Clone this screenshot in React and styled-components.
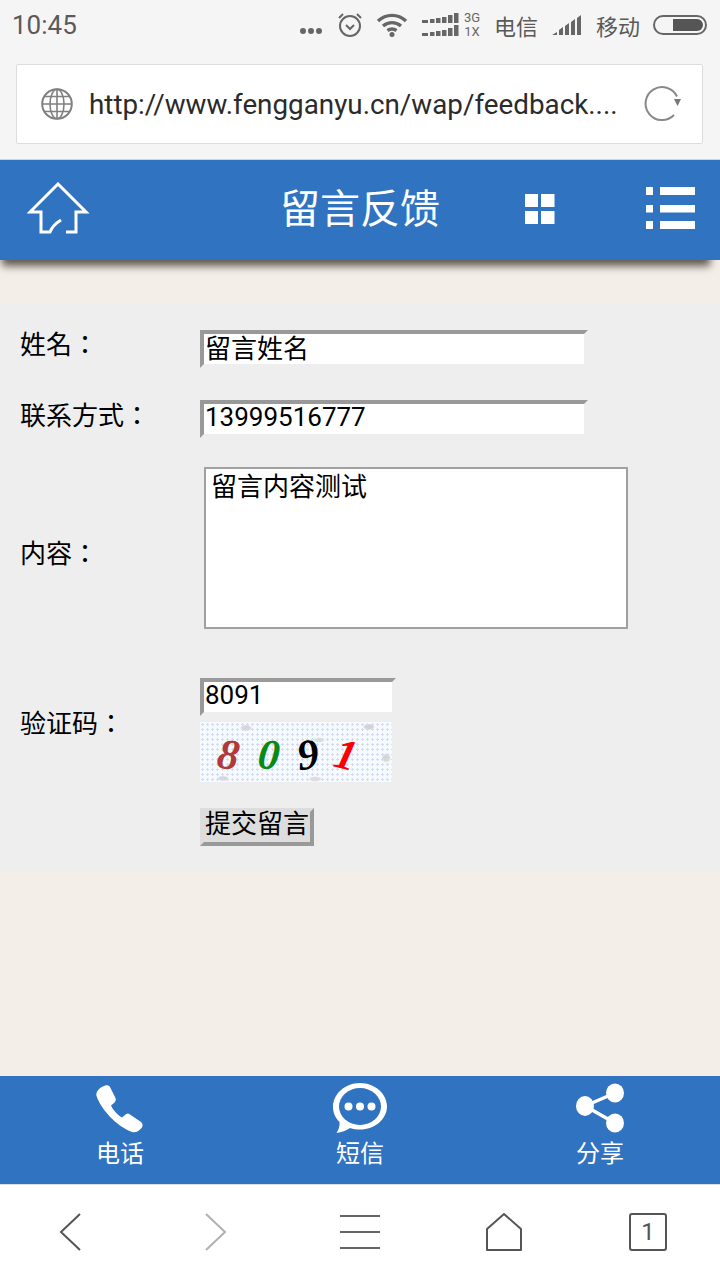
import React from "react";
import styled, { createGlobalStyle } from "styled-components";

const blue = "#3073c1";

const GlobalStyle = createGlobalStyle`
  html, body {
    margin: 0;
    padding: 0;
    background: #f3eee8;
  }
  * {
    box-sizing: border-box;
  }
  body {
    font-family: Roboto, "Noto Sans CJK SC", sans-serif;
  }
`;

const Page = styled.div`
  width: 720px;
  height: 1280px;
  display: flex;
  flex-direction: column;
  overflow: hidden;
  background: #f3eee8;
`;

const BrowserTop = styled.div`
  height: 160px;
  background: #f5f5f5;
  border-bottom: 1px solid #d4d4d4;
  flex: none;
`;

const StatusBar = styled.div`
  height: 50px;
  display: flex;
  align-items: center;
  padding: 0 13px 0 12px;
  color: #5a5a5a;
`;

const Time = styled.span`
  font-size: 26px;
  margin-right: auto;
`;

const StatusIcon = styled.svg`
  display: block;
  flex: none;
  margin-left: ${({ $ml }) => $ml || 0}px;
  margin-top: ${({ $mt }) => $mt || 0}px;
`;

const NetLabel = styled.div`
  display: flex;
  flex-direction: column;
  font-size: 13px;
  line-height: 14px;
  margin-left: 4px;
  color: #666;
  width: 18px;
  align-items: center;
`;

const Carrier = styled.span`
  font-size: 22px;
  margin-left: ${({ $ml }) => $ml}px;
`;

const UrlBox = styled.div`
  margin: 14px 17px 0 16px;
  height: 80px;
  background: #fff;
  border: 1px solid #dcdcdc;
  border-radius: 2px;
  display: flex;
  align-items: center;
  padding: 0 20px 0 24px;
`;

const UrlText = styled.span`
  font-size: 27.8px;
  color: #2b2b2b;
  margin-left: 16px;
  flex: 1;
  white-space: nowrap;
  overflow: hidden;
`;

const UrlIcon = styled.svg`
  display: block;
  flex: none;
`;

const Header = styled.header`
  height: 100px;
  flex: none;
  background: ${blue};
  display: flex;
  align-items: center;
  padding-left: 27px;
  box-shadow: -4px 12px 8px -6px #5f574f;
  position: relative;
`;

const HeaderTitle = styled.h1`
  margin: 0 0 0 189px;
  font-size: 40px;
  font-weight: 400;
  color: #fff;
  line-height: 1;
`;

const HeaderIcon = styled.svg`
  display: block;
  flex: none;
  margin-left: ${({ $ml }) => $ml || 0}px;
  margin-bottom: ${({ $mb }) => $mb || 0}px;
`;

const Main = styled.main`
  flex: 1;
  padding-top: 44px;
`;

const FormPanel = styled.form`
  background: #eee;
  padding: 26px 0;
  display: flex;
  flex-direction: column;
`;

const Row = styled.div`
  display: flex;
  align-items: center;
  margin-top: ${({ $mt }) => $mt || 0}px;
`;

const Label = styled.label`
  width: 200px;
  flex: none;
  padding-left: 20px;
  padding-bottom: ${({ $pb }) => $pb || 0}px;
  padding-top: ${({ $pt }) => $pt || 0}px;
  font: 26px/30px Roboto, "Noto Sans CJK JP", sans-serif;
  color: #000;
`;

const TextInput = styled.input`
  display: block;
  width: ${({ $w }) => $w}px;
  height: 38px;
  padding: 0 1px 5px;
  margin: 0;
  border: 4px solid;
  border-color: #999 #eee #eee #999;
  border-radius: 0;
  outline: none;
  background: #fff;
  color: #000;
  font: 26px Roboto, "Noto Sans CJK SC", sans-serif;
`;

const TextArea = styled.textarea`
  display: block;
  width: 424px;
  height: 162px;
  margin-left: 4px;
  padding: 2px 5px;
  border: 2px solid #a0a0a0;
  border-radius: 0;
  outline: none;
  resize: none;
  background: #fff;
  color: #000;
  font: 26px/32px Roboto, "Noto Sans CJK SC", sans-serif;
`;

const Stack = styled.div`
  display: flex;
  flex-direction: column;
  gap: 6px;
`;

const Captcha = styled.div`
  width: 192px;
  height: 60px;
  display: flex;
  align-items: center;
  padding: 4px 0 0 15px;
  background-color: #f4fbff;
  background-image:
    radial-gradient(circle, #dcd8f4 1px, transparent 1.2px),
    radial-gradient(ellipse 9px 5px at 24% 10%, #d6d6d6 40%, transparent 70%),
    radial-gradient(ellipse 9px 5px at 88% 8%, #d2d2d2 40%, transparent 70%),
    radial-gradient(ellipse 9px 4px at 12% 94%, #d6d6d6 40%, transparent 70%),
    radial-gradient(ellipse 9px 4px at 62% 30%, #dcdcdc 40%, transparent 70%),
    radial-gradient(ellipse 7px 7px at 97% 60%, #d6d6d6 40%, transparent 70%),
    radial-gradient(ellipse 10px 4px at 60% 95%, #dcdcdc 40%, transparent 70%);
  background-size: 5px 5px, 100% 100%, 100% 100%, 100% 100%, 100% 100%, 100% 100%, 100% 100%;
`;

const CaptchaDigit = styled.span`
  width: ${({ $w }) => $w}px;
  text-align: center;
  font: italic 700 43px/1 "Liberation Serif", serif;
  color: ${({ $color }) => $color};
  transform: rotate(${({ $rot }) => $rot}deg);
`;

const SubmitButton = styled.button`
  display: block;
  margin: 0 0 0 200px;
  height: 38px;
  width: 114px;
  padding: 0 1px 6px;
  background: #ddd;
  border: 4px solid;
  border-color: #ddd #999 #999 #ddd;
  border-radius: 0;
  color: #000;
  font: 26px/24px Roboto, "Noto Sans CJK SC", sans-serif;
  white-space: nowrap;
`;

const ActionBar = styled.nav`
  height: 108px;
  flex: none;
  background: ${blue};
  display: grid;
  grid-template-columns: repeat(3, 1fr);
`;

const Action = styled.div`
  display: flex;
  flex-direction: column;
  align-items: center;
  color: #fff;
  font-size: 24px;
  line-height: 28px;
`;

const ActionIcon = styled.svg`
  display: block;
  margin-top: 6px;
  height: 52px;
  margin-bottom: 6px;
`;

const BottomBar = styled.div`
  height: 96px;
  flex: none;
  background: #fff;
  border-top: 1px solid #ddd;
  padding-bottom: 2px;
  display: grid;
  grid-template-columns: repeat(5, 1fr);
  align-items: center;
  justify-items: center;
`;

const NavIcon = styled.svg`
  display: block;
  margin-right: ${({ $mr }) => $mr || 0}px;
`;

const TabCount = styled.div`
  width: 38px;
  height: 38px;
  border: 2px solid #555;
  border-radius: 3px;
  display: flex;
  align-items: center;
  justify-content: center;
  color: #555;
  font-size: 24px;
`;

function Alarm() {
  return (
    <StatusIcon width="26" height="26" viewBox="0 0 26 26" $ml={14} fill="none" stroke="#666" strokeWidth="2">
      <circle cx="13" cy="14" r="10" />
      <path d="M9 13l4 4 4-4M2 6l4-4M24 6l-4-4" />
    </StatusIcon>
  );
}

function Wifi() {
  return (
    <StatusIcon width="32" height="24" viewBox="0 0 32 24" $ml={13} fill="none" stroke="#666" strokeWidth="3.4">
      <path d="M2 8c8-7.5 20-7.5 28 0M7 13c5.5-4.5 12.5-4.5 18 0M11.5 17.5c2.8-2 6.2-2 9 0" />
      <circle cx="16" cy="21.5" r="2.5" fill="#666" stroke="none" />
    </StatusIcon>
  );
}

function NetBars() {
  const xs = [0, 8, 14, 20, 26, 32];
  const hs = [3, 4, 5, 6, 8, 11];
  return (
    <StatusIcon width="37" height="24" viewBox="0 0 37 24" $ml={14} fill="#666">
      {xs.map((x, i) => (
        <rect key={x} x={x} y={10 - hs[i]} width={i === 0 ? 6 : 4.5} height={hs[i]} />
      ))}
      {xs.map((x, i) => (
        <rect key={x} x={x} y={23 - hs[i]} width={i === 0 ? 6 : 4.5} height={hs[i]} />
      ))}
    </StatusIcon>
  );
}

function Signal() {
  return (
    <StatusIcon width="30" height="22" viewBox="0 0 30 22" $ml={14} fill="#666">
      <path d="M0 21l5-3v3zM7 21v-5l4-3v8zM13 21V12l4-3v12zM19 21V8l4-3v16zM25 21V4l4-3v20z" />
    </StatusIcon>
  );
}

function Battery() {
  return (
    <StatusIcon width="54" height="20" viewBox="0 0 54 20" $ml={13}>
      <rect x="1" y="1" width="52" height="18" rx="9" fill="none" stroke="#666" strokeWidth="2" />
      <path d="M20 4h24a6 6 0 0 1 0 12H20z" fill="#555" />
    </StatusIcon>
  );
}

function Globe() {
  return (
    <UrlIcon width="32" height="32" viewBox="0 0 32 32" fill="none" stroke="#808080" strokeWidth="1.6">
      <circle cx="16" cy="16" r="14.8" strokeWidth="2" />
      <ellipse cx="16" cy="16" rx="7" ry="14.8" />
      <path d="M16 1v30M1 16h30M3.5 8.5h25M3.5 23.5h25" />
    </UrlIcon>
  );
}

function Reload() {
  return (
    <UrlIcon width="38" height="36" viewBox="0 0 38 36" fill="none">
      <path d="M30 29A16.5 16.5 0 1 1 33 10.500" stroke="#888" strokeWidth="2" />
      <path d="M30 13h7l-3.500 7z" fill="#777" />
    </UrlIcon>
  );
}

function HomeOutline() {
  return (
    <HeaderIcon width="64" height="54" viewBox="0 0 64 54" $mb={2} fill="none" stroke="#fff" strokeWidth="3">
      <path d="M39 50h10V30h10L31 2 3 30h11v20h9c1.500-4 4.500-8 11-12" />
    </HeaderIcon>
  );
}

function GridIcon() {
  return (
    <HeaderIcon width="30" height="30" viewBox="0 0 30 30" $ml={85} $mb={2} fill="#fff">
      <rect width="13" height="13" />
      <rect x="16" width="13.500" height="13" />
      <rect y="17" width="13" height="13" />
      <rect x="16" y="17" width="13.500" height="13" />
    </HeaderIcon>
  );
}

function ListIcon() {
  return (
    <HeaderIcon width="50" height="42" viewBox="0 0 50 42" $ml={91} $mb={4} fill="#fff">
      <rect width="7" height="8" />
      <rect x="14" width="35" height="8" />
      <rect y="18" width="7" height="7.500" />
      <rect x="14" y="18" width="35" height="7.500" />
      <rect y="34" width="7" height="8" />
      <rect x="14" y="34" width="35" height="8" />
    </HeaderIcon>
  );
}

function PhoneIcon() {
  return (
    <ActionIcon width="48" height="52" viewBox="0 -3 48 52" fill="#fff">
      <path d="M8 1C10-.5 13 0 14 2l5.500 11c.8 2 0 3.500-1.500 5l-3 2.500c2 4.500 6.500 9.500 11 12l3-2.500c1.500-1.500 3-2 5-.5L45 37c2 2 2 4 .5 6-3 3.500-6 5-9.500 4C20 41 5 24 .5 11-.5 7 3 3 8 1z" />
    </ActionIcon>
  );
}

function MessageIcon() {
  return (
    <ActionIcon width="56" height="52" viewBox="0 0 56 52">
      <path
        d="M28 1C13 1 1 12 1 25c0 6 2.500 11 6.500 15 .5 4-1 8-3 11 5-.5 10-2.500 13.500-5 3 1 6.500 1.500 10 1.500 15 0 27-10.500 27-23S43 1 28 1z"
        fill="#fff"
      />
      <ellipse cx="28" cy="24.500" rx="21" ry="18.500" fill={blue} />
      <circle cx="16.500" cy="24.500" r="4" fill="#fff" />
      <circle cx="28" cy="24.500" r="4" fill="#fff" />
      <circle cx="39.500" cy="24.500" r="4" fill="#fff" />
    </ActionIcon>
  );
}

function ShareIcon() {
  return (
    <ActionIcon width="50" height="52" viewBox="0 0 50 52" fill="#fff">
      <path d="M10 23L40 10M10 23l30 17" stroke="#fff" strokeWidth="3.500" transform="translate(0 1)" />
      <ellipse cx="40" cy="11" rx="9" ry="9.500" />
      <ellipse cx="10" cy="24" rx="9" ry="10" />
      <ellipse cx="40" cy="41" rx="9" ry="9.500" />
    </ActionIcon>
  );
}

export default function App() {
  return (
    <Page>
      <GlobalStyle />
      <BrowserTop>
        <StatusBar>
          <Time>10:45</Time>
          <StatusIcon width="24" height="8" viewBox="0 0 24 8" fill="#666" $mt={12}>
            <circle cx="4" cy="4" r="3" />
            <circle cx="12" cy="4" r="3" />
            <circle cx="20" cy="4" r="3" />
          </StatusIcon>
          <Alarm />
          <Wifi />
          <NetBars />
          <NetLabel>
            <span>3G</span>
            <span>1X</span>
          </NetLabel>
          <Carrier $ml={13}>电信</Carrier>
          <Signal />
          <Carrier $ml={14}>移动</Carrier>
          <Battery />
        </StatusBar>
        <UrlBox>
          <Globe />
          <UrlText>http://www.fengganyu.cn/wap/feedback....</UrlText>
          <Reload />
        </UrlBox>
      </BrowserTop>

      <Header>
        <HomeOutline />
        <HeaderTitle>留言反馈</HeaderTitle>
        <GridIcon />
        <ListIcon />
      </Header>

      <Main>
        <FormPanel>
          <Row>
            <Label $pb={8}>姓名：</Label>
            <TextInput $w={388} defaultValue="留言姓名" />
          </Row>
          <Row $mt={32}>
            <Label $pb={6}>联系方式：</Label>
            <TextInput $w={388} defaultValue="13999516777" />
          </Row>
          <Row $mt={29}>
            <Label $pt={12}>内容：</Label>
            <TextArea defaultValue="留言内容测试" />
          </Row>
          <Row $mt={49}>
            <Label $pb={12}>验证码：</Label>
            <Stack>
              <TextInput $w={196} defaultValue="8091" />
              <Captcha>
                <CaptchaDigit $w={27} $color="#b03a3a" $rot={8}>8</CaptchaDigit>
                <CaptchaDigit $w={54} $color="#0a8a14" $rot={6}>0</CaptchaDigit>
                <CaptchaDigit $w={24} $color="#000" $rot={-8}>9</CaptchaDigit>
                <CaptchaDigit $w={52} $color="#f00" $rot={14}>1</CaptchaDigit>
              </Captcha>
            </Stack>
          </Row>
          <Row $mt={26}>
            <SubmitButton type="button">提交留言</SubmitButton>
          </Row>
        </FormPanel>
      </Main>

      <ActionBar>
        <Action>
          <PhoneIcon />
          电话
        </Action>
        <Action>
          <MessageIcon />
          短信
        </Action>
        <Action>
          <ShareIcon />
          分享
        </Action>
      </ActionBar>

      <BottomBar>
        <NavIcon $mr={5} width="22" height="38" viewBox="0 0 22 38" fill="none" stroke="#555" strokeWidth="2">
          <path d="M21 1L2 19l19 18" />
        </NavIcon>
        <NavIcon $mr={1} width="22" height="38" viewBox="0 0 22 38" fill="none" stroke="#b0b0b0" strokeWidth="2">
          <path d="M1 1l19 18L1 37" />
        </NavIcon>
        <NavIcon width="40" height="34" viewBox="0 0 40 34" fill="none" stroke="#666" strokeWidth="2">
          <path d="M0 1h40M0 17h40M0 33h40" />
        </NavIcon>
        <NavIcon width="36" height="38" viewBox="0 0 36 38" fill="none" stroke="#555" strokeWidth="2" strokeLinejoin="round">
          <path d="M18 1L1 16v21h34V16z" />
        </NavIcon>
        <TabCount>1</TabCount>
      </BottomBar>
    </Page>
  );
}
